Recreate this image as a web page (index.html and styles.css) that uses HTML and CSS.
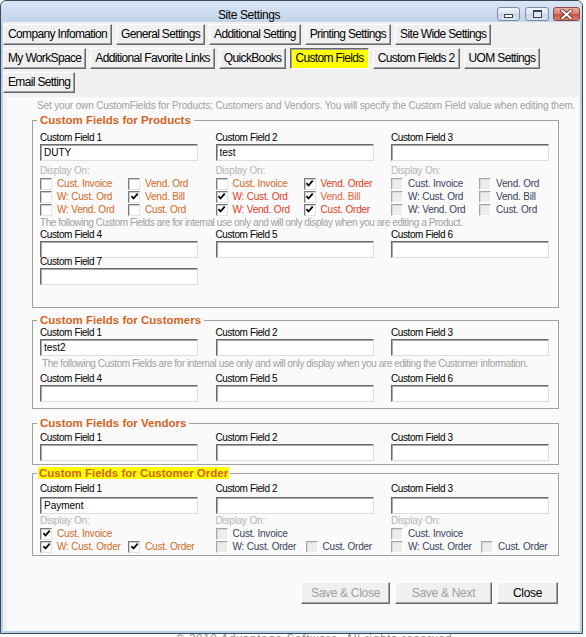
FILE: index.html
```html
<!DOCTYPE html>
<html>
<head>
<meta charset="utf-8">
<title>Site Settings</title>
<link rel="stylesheet" href="styles.css">
</head>
<body>
<div class="window">
  <div class="titlebar">
    <div class="title">Site Settings</div>
    <div class="wbtns">
      <span class="wb wb-min"><span class="g-min"></span></span>
      <span class="wb wb-max"><span class="g-max"></span></span>
      <span class="wb wb-close"><svg class="g-x" viewBox="0 0 12 10"><path class="xo" d="M2 1.5 10 8.5M10 1.5 2 8.5"/><path class="xi" d="M2 1.5 10 8.5M10 1.5 2 8.5"/></svg></span>
    </div>
  </div>

  <div class="tabs">
    <div class="tabrow">
      <button class="btn">Company Infomation</button>
      <button class="btn">General Settings</button>
      <button class="btn">Additional Setting</button>
      <button class="btn">Printing Settings</button>
      <button class="btn">Site Wide Settings</button>
    </div>
    <div class="tabrow">
      <button class="btn">My WorkSpace</button>
      <button class="btn">Additional Favorite Links</button>
      <button class="btn">QuickBooks</button>
      <button class="btn btn-active">Custom Fields</button>
      <button class="btn">Custom Fields 2</button>
      <button class="btn">UOM Settings</button>
    </div>
    <div class="tabrow">
      <button class="btn">Email Setting</button>
    </div>
  </div>

  <div class="panel">
    <p class="intro">Set your own CustomFields for Products; Customers and Vendors. You will specify the Custom Field value when editing them.</p>

    <fieldset class="group g-products">
      <legend><span>Custom Fields for Products</span></legend>
      <div class="cols">
        <div class="col">
          <label class="flabel">Custom Field 1</label>
          <input class="inp" type="text" value="DUTY">
          <div class="disp">Display On:</div>
          <div class="cbgrid">
            <span class="cbi"><span class="cb"></span><span class="o">Cust. Invoice</span></span>
            <span class="cbi"><span class="cb"></span><span class="o">Vend. Ord</span></span>
            <span class="cbi"><span class="cb"></span><span class="o">W: Cust. Ord</span></span>
            <span class="cbi"><span class="cb"><svg class="tick" viewBox="0 0 10 10"><path d="M1.6 4.6 3.9 7.2 8.6 1.8"/></svg></span><span class="o">Vend. Bill</span></span>
            <span class="cbi"><span class="cb"></span><span class="o">W: Vend. Ord</span></span>
            <span class="cbi"><span class="cb"></span><span class="o">Cust. Ord</span></span>
          </div>
        </div>
        <div class="col">
          <label class="flabel">Custom Field 2</label>
          <input class="inp" type="text" value="test">
          <div class="disp">Display On:</div>
          <div class="cbgrid">
            <span class="cbi"><span class="cb"></span><span class="o">Cust. Invoice</span></span>
            <span class="cbi"><span class="cb"><svg class="tick" viewBox="0 0 10 10"><path d="M1.6 4.6 3.9 7.2 8.6 1.8"/></svg></span><span class="r">Vend. Order</span></span>
            <span class="cbi"><span class="cb"><svg class="tick" viewBox="0 0 10 10"><path d="M1.6 4.6 3.9 7.2 8.6 1.8"/></svg></span><span class="r">W: Cust. Ord</span></span>
            <span class="cbi"><span class="cb"><svg class="tick" viewBox="0 0 10 10"><path d="M1.6 4.6 3.9 7.2 8.6 1.8"/></svg></span><span class="lr">Vend. Bill</span></span>
            <span class="cbi"><span class="cb"><svg class="tick" viewBox="0 0 10 10"><path d="M1.6 4.6 3.9 7.2 8.6 1.8"/></svg></span><span class="r">W: Vend. Ord</span></span>
            <span class="cbi"><span class="cb"><svg class="tick" viewBox="0 0 10 10"><path d="M1.6 4.6 3.9 7.2 8.6 1.8"/></svg></span><span class="r">Cust. Order</span></span>
          </div>
        </div>
        <div class="col">
          <label class="flabel">Custom Field 3</label>
          <input class="inp" type="text" value="">
          <div class="disp">Display On:</div>
          <div class="cbgrid">
            <span class="cbi"><span class="cb dis"></span><span class="d">Cust. Invoice</span></span>
            <span class="cbi"><span class="cb dis"></span><span class="d">Vend. Ord</span></span>
            <span class="cbi"><span class="cb dis"></span><span class="d">W: Cust. Ord</span></span>
            <span class="cbi"><span class="cb dis"></span><span class="d">Vend. Bill</span></span>
            <span class="cbi"><span class="cb dis"></span><span class="d">W: Vend. Ord</span></span>
            <span class="cbi"><span class="cb dis"></span><span class="d">Cust. Ord</span></span>
          </div>
        </div>
      </div>
      <p class="note">The following Custom Fields are for internal use only and will only display when you are editing a Product.</p>
      <div class="cols">
        <div class="col"><label class="flabel">Custom Field 4</label><input class="inp" type="text" value=""></div>
        <div class="col"><label class="flabel">Custom Field 5</label><input class="inp" type="text" value=""></div>
        <div class="col"><label class="flabel">Custom Field 6</label><input class="inp" type="text" value=""></div>
      </div>
      <div class="cols cols-tight">
        <div class="col"><label class="flabel">Custom Field 7</label><input class="inp" type="text" value=""></div>
      </div>
    </fieldset>

    <fieldset class="group g-customers">
      <legend><span>Custom Fields for Customers</span></legend>
      <div class="cols">
        <div class="col"><label class="flabel">Custom Field 1</label><input class="inp" type="text" value="test2"></div>
        <div class="col"><label class="flabel">Custom Field 2</label><input class="inp" type="text" value=""></div>
        <div class="col"><label class="flabel">Custom Field 3</label><input class="inp" type="text" value=""></div>
      </div>
      <p class="note note-cust">The following Custom Fields are for internal use only and will only display when you are editing the Customer information.</p>
      <div class="cols cols-after-note">
        <div class="col"><label class="flabel">Custom Field 4</label><input class="inp" type="text" value=""></div>
        <div class="col"><label class="flabel">Custom Field 5</label><input class="inp" type="text" value=""></div>
        <div class="col"><label class="flabel">Custom Field 6</label><input class="inp" type="text" value=""></div>
      </div>
    </fieldset>

    <fieldset class="group g-vendors">
      <legend><span>Custom Fields for Vendors</span></legend>
      <div class="cols">
        <div class="col"><label class="flabel">Custom Field 1</label><input class="inp" type="text" value=""></div>
        <div class="col"><label class="flabel">Custom Field 2</label><input class="inp" type="text" value=""></div>
        <div class="col"><label class="flabel">Custom Field 3</label><input class="inp" type="text" value=""></div>
      </div>
    </fieldset>

    <fieldset class="group g-orders">
      <legend><span class="hl">Custom Fields for Customer Order</span></legend>
      <div class="cols">
        <div class="col">
          <label class="flabel">Custom Field 1</label>
          <input class="inp inp-gap" type="text" value="Payment">
          <div class="disp disp-o">Display On:</div>
          <div class="cbgrid">
            <span class="cbi wide"><span class="cb"><svg class="tick" viewBox="0 0 10 10"><path d="M1.6 4.6 3.9 7.2 8.6 1.8"/></svg></span><span class="o">Cust. Invoice</span></span>
            <span class="cbi"><span class="cb"><svg class="tick" viewBox="0 0 10 10"><path d="M1.6 4.6 3.9 7.2 8.6 1.8"/></svg></span><span class="o">W: Cust. Order</span></span>
            <span class="cbi"><span class="cb"><svg class="tick" viewBox="0 0 10 10"><path d="M1.6 4.6 3.9 7.2 8.6 1.8"/></svg></span><span class="o">Cust. Order</span></span>
          </div>
        </div>
        <div class="col">
          <label class="flabel">Custom Field 2</label>
          <input class="inp inp-gap" type="text" value="">
          <div class="disp disp-o">Display On:</div>
          <div class="cbgrid cbgrid-w">
            <span class="cbi wide"><span class="cb dis"></span><span class="d">Cust. Invoice</span></span>
            <span class="cbi"><span class="cb dis"></span><span class="d">W: Cust. Order</span></span>
            <span class="cbi"><span class="cb dis"></span><span class="d">Cust. Order</span></span>
          </div>
        </div>
        <div class="col">
          <label class="flabel">Custom Field 3</label>
          <input class="inp inp-gap" type="text" value="">
          <div class="disp disp-o">Display On:</div>
          <div class="cbgrid cbgrid-w">
            <span class="cbi wide"><span class="cb dis"></span><span class="d">Cust. Invoice</span></span>
            <span class="cbi"><span class="cb dis"></span><span class="d">W: Cust. Order</span></span>
            <span class="cbi"><span class="cb dis"></span><span class="d">Cust. Order</span></span>
          </div>
        </div>
      </div>
    </fieldset>

    <div class="actions">
      <button class="btn btn-act" disabled>Save &amp; Close</button>
      <button class="btn btn-act btn-next" disabled>Save &amp; Next</button>
      <button class="btn btn-act btn-close">Close</button>
    </div>
  </div>
</div>
<div class="footer">© 2010 Advantage Software. All rights reserved.</div>
</body>
</html>
```

FILE: styles.css
```css
* { box-sizing: border-box; }

body {
  margin: 0;
  background: #ffffff;
  font-family: "Liberation Sans", Arial, sans-serif;
  overflow: hidden;
}

.window {
  width: 583px;
  height: 634px;
  border: 1px solid #3b4858;
  border-radius: 6px 6px 0 0;
  background: #f0f0f0;
  box-shadow: inset 0 0 0 2px #b8cfe8;
  padding: 0 2px 2px 2px;
  display: flex;
  flex-direction: column;
  overflow: hidden;
}

/* ---------- title bar ---------- */
.titlebar {
  margin: 0 -2px;
  height: 21px;
  flex: none;
  display: flex;
  padding-right: 2px;
  background: linear-gradient(#d9e5f4, #c3d5eb);
  border-radius: 5px 5px 0 0;
}

.title {
  flex: 1;
  text-align: center;
  padding-top: 7px;
  font-size: 12px;
  line-height: 14px;
  letter-spacing: -0.4px;
  color: #000;
}

.wbtns {
  display: flex;
  gap: 4px;
  padding-top: 6px;
}

.wb {
  height: 14px;
  border: 1px solid #7b8da6;
  border-radius: 3px;
  display: flex;
  align-items: center;
  justify-content: center;
  background: linear-gradient(#f1f5fb, #d8e2ef 50%, #c8d5e6 51%, #dbe4f0);
}

.wb-min { width: 23px; margin-right: 1px; }
.wb-max { width: 24px; }
.wb-close {
  width: 27px;
  border-color: #8a4a42;
  background: linear-gradient(#eab0a4, #da7a68 50%, #c8503f 51%, #d98068);
}

.g-min {
  width: 9px;
  height: 4px;
  margin-top: 4px;
  border: 1px solid #3a4556;
  background: #fff;
}

.g-max {
  width: 9px;
  height: 8px;
  border: 1px solid #3a4556;
  border-top-width: 2px;
  background: #dde6f1;
}

.g-x { width: 13px; height: 11px; }
.g-x .xo { stroke: #6a3028; stroke-width: 3.4; fill: none; stroke-linecap: square; }
.g-x .xi { stroke: #ffffff; stroke-width: 1.8; fill: none; stroke-linecap: square; }

/* ---------- buttons ---------- */
.btn {
  height: 21px;
  margin: 0;
  padding: 0 4px;
  font-family: "Liberation Sans", Arial, sans-serif;
  font-size: 12px;
  line-height: 19px;
  letter-spacing: -0.65px;
  color: #000;
  background: #f0f0f0;
  border: 1px solid;
  border-color: #ffffff #696969 #696969 #ffffff;
  box-shadow: inset -1px -1px 0 #a0a0a0;
  white-space: nowrap;
}

.btn-active {
  background: #ffff00;
  border-color: #696969 #ffffff #ffffff #696969;
  box-shadow: inset 1px 1px 0 #a0a0a0;
}

/* ---------- tabs ---------- */
.tabs {
  flex: none;
  padding-top: 2px;
  display: flex;
  flex-direction: column;
  gap: 3px;
}

.tabrow {
  display: flex;
  gap: 4px;
}

/* ---------- content panel ---------- */
.panel {
  flex: 1;
  margin: 4px 1px 0 4px;
  padding: 3px 0 0 25px;
  background: #fafafa;
  display: flex;
  flex-direction: column;
  align-items: flex-start;
}

.intro {
  margin: 0 0 0 5px;
  font-size: 10px;
  line-height: 12px;
  letter-spacing: -0.15px;
  color: #a0a0a0;
  white-space: nowrap;
}

.group {
  margin: 0;
  width: 527px;
  min-width: 0;
  padding: 0 9px 0 7px;
  border: 1px solid #a0a0a0;
}

.group legend {
  margin-left: -3px;
  padding: 0 3px;
  font-size: 11.5px;
  font-weight: bold;
  line-height: 14px;
  color: #d2641f;
}

.group legend .hl {
  display: inline-block;
  line-height: 12px;
  background: #ffff00;
  padding: 0 1px;
  margin: 0 -2px;
}

.g-products { margin-top: 1px; padding-top: 5px; padding-bottom: 22px; }
.g-customers { margin-top: 5px; padding-bottom: 6px; }
.g-vendors { margin-top: 7px; padding-top: 2px; padding-bottom: 3px; }
.g-orders { margin-top: 1px; padding-top: 3px; padding-bottom: 2px; }

.cols {
  display: grid;
  grid-template-columns: repeat(3, 158px);
  column-gap: 17.5px;
}

.cols-tight { margin-top: -2px; }
.cols-after-note { margin-top: 3px; }

.flabel {
  display: block;
  font-size: 10px;
  line-height: 12px;
  letter-spacing: -0.4px;
  color: #000;
  white-space: nowrap;
}

.inp {
  display: block;
  width: 158px;
  height: 17px;
  margin: 0;
  padding: 0 3px;
  font-family: "Liberation Sans", Arial, sans-serif;
  font-size: 10px;
  color: #000;
  background: #ffffff;
  border: 1px solid;
  border-color: #6a6a6a #dedede #dedede #6a6a6a;
  box-shadow: inset 1px 1px 0 #a8a8a8;
  outline: none;
}

.inp-gap { margin-top: 2px; }

.disp {
  margin-top: 4px;
  font-size: 10px;
  line-height: 12px;
  letter-spacing: -0.2px;
  color: #b4b4b4;
}

.disp-o { margin-top: 1px; }

.note {
  margin: 1px 0 0 0;
  font-size: 10px;
  line-height: 12px;
  letter-spacing: -0.42px;
  color: #a0a0a0;
  white-space: nowrap;
}

.note-cust { margin: 2px 0 0 2px; }

.cbgrid {
  display: grid;
  grid-template-columns: 88px auto;
  grid-auto-rows: 13px;
}

.cbgrid-w { grid-template-columns: 90px auto; }

.cbi {
  display: flex;
  align-items: center;
  gap: 5px;
  font-size: 10px;
  line-height: 13px;
  letter-spacing: -0.2px;
  white-space: nowrap;
}

.cbi.wide { grid-column: 1 / -1; }

.cb {
  flex: none;
  width: 12px;
  height: 12px;
  border: 1px solid;
  border-color: #7a7a7a #e4e4e4 #e4e4e4 #7a7a7a;
  background: #ffffff;
  box-shadow: inset 1px 1px 0 #cccccc;
  display: flex;
  align-items: center;
  justify-content: center;
}

.cb.dis {
  background: #ececec;
  border-color: #a6a6a6 #ffffff #ffffff #a6a6a6;
  box-shadow: inset 1px 1px 0 #d8d8d8;
}

.tick {
  width: 9px;
  height: 9px;
}

.tick path {
  fill: none;
  stroke: #000;
  stroke-width: 2;
}

.o { color: #d2691e; }
.r { color: #e0401c; }
.lr { color: #e6603a; }
.d { color: #38425a; }

/* ---------- bottom actions ---------- */
.actions {
  width: 527px;
  margin-top: 26px;
  display: flex;
  justify-content: flex-end;
  gap: 5px;
}

.btn-act {
  height: 22px;
  line-height: 20px;
  letter-spacing: -0.3px;
  width: 89px;
}

.btn-next { width: 97px; }
.btn-close { width: 61px; margin-right: 1px; }

.btn-act:disabled { color: #a0a0a0; }

/* ---------- footer peeking below ---------- */
.footer {
  height: 3px;
  overflow: hidden;
  padding-left: 176px;
  font-size: 11px;
  line-height: 9px;
  letter-spacing: 1px;
  color: #8a8a8a;
  white-space: nowrap;
}
```
